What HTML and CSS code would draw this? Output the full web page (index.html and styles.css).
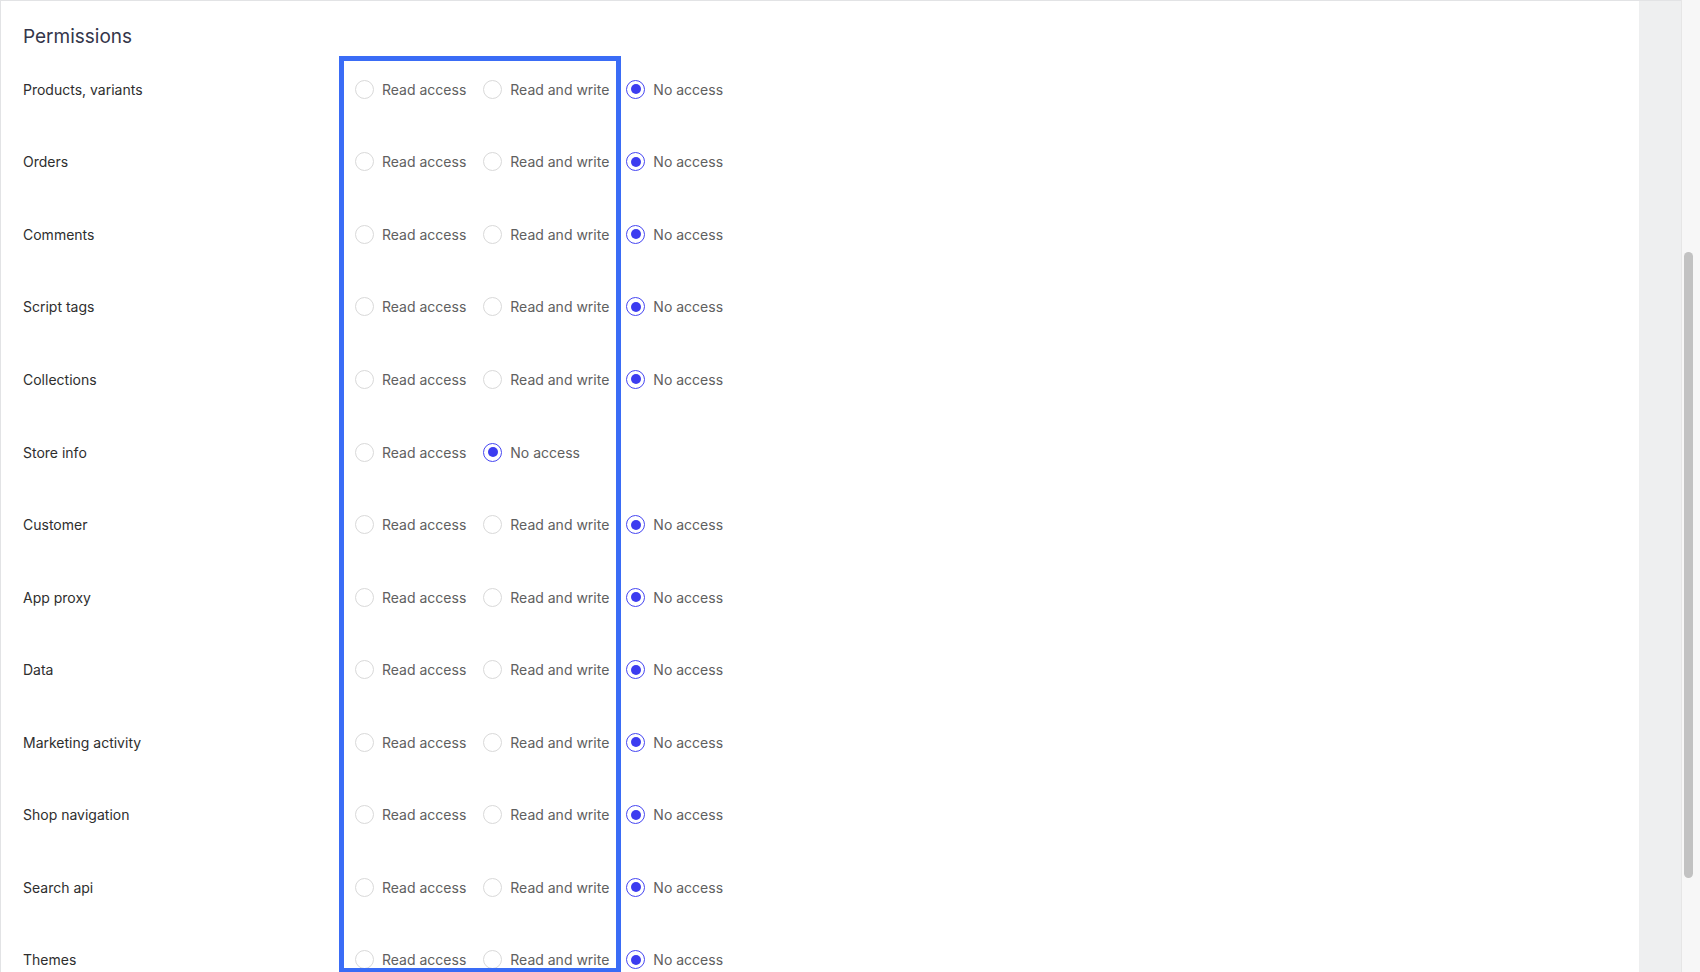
FILE: index.html
```html
<!DOCTYPE html>
<html lang="en">
<head>
<meta charset="utf-8">
<title>Permissions</title>
<link rel="stylesheet" href="styles.css">
</head>
<body>
<div class="page">
  <main class="panel">
    <h2 class="title">Permissions</h2>
    <div class="perm-list">
      <div class="perm-row"><span class="perm-label">Products, variants</span><div class="opts"><label class="opt"><span class="radio"></span>Read access</label><label class="opt"><span class="radio"></span>Read and write</label><label class="opt"><span class="radio checked"></span>No access</label></div></div>
      <div class="perm-row"><span class="perm-label">Orders</span><div class="opts"><label class="opt"><span class="radio"></span>Read access</label><label class="opt"><span class="radio"></span>Read and write</label><label class="opt"><span class="radio checked"></span>No access</label></div></div>
      <div class="perm-row"><span class="perm-label">Comments</span><div class="opts"><label class="opt"><span class="radio"></span>Read access</label><label class="opt"><span class="radio"></span>Read and write</label><label class="opt"><span class="radio checked"></span>No access</label></div></div>
      <div class="perm-row"><span class="perm-label">Script tags</span><div class="opts"><label class="opt"><span class="radio"></span>Read access</label><label class="opt"><span class="radio"></span>Read and write</label><label class="opt"><span class="radio checked"></span>No access</label></div></div>
      <div class="perm-row"><span class="perm-label">Collections</span><div class="opts"><label class="opt"><span class="radio"></span>Read access</label><label class="opt"><span class="radio"></span>Read and write</label><label class="opt"><span class="radio checked"></span>No access</label></div></div>
      <div class="perm-row"><span class="perm-label">Store info</span><div class="opts"><label class="opt"><span class="radio"></span>Read access</label><label class="opt"><span class="radio checked"></span>No access</label></div></div>
      <div class="perm-row"><span class="perm-label">Customer</span><div class="opts"><label class="opt"><span class="radio"></span>Read access</label><label class="opt"><span class="radio"></span>Read and write</label><label class="opt"><span class="radio checked"></span>No access</label></div></div>
      <div class="perm-row"><span class="perm-label">App proxy</span><div class="opts"><label class="opt"><span class="radio"></span>Read access</label><label class="opt"><span class="radio"></span>Read and write</label><label class="opt"><span class="radio checked"></span>No access</label></div></div>
      <div class="perm-row"><span class="perm-label">Data</span><div class="opts"><label class="opt"><span class="radio"></span>Read access</label><label class="opt"><span class="radio"></span>Read and write</label><label class="opt"><span class="radio checked"></span>No access</label></div></div>
      <div class="perm-row"><span class="perm-label">Marketing activity</span><div class="opts"><label class="opt"><span class="radio"></span>Read access</label><label class="opt"><span class="radio"></span>Read and write</label><label class="opt"><span class="radio checked"></span>No access</label></div></div>
      <div class="perm-row"><span class="perm-label">Shop navigation</span><div class="opts"><label class="opt"><span class="radio"></span>Read access</label><label class="opt"><span class="radio"></span>Read and write</label><label class="opt"><span class="radio checked"></span>No access</label></div></div>
      <div class="perm-row"><span class="perm-label">Search api</span><div class="opts"><label class="opt"><span class="radio"></span>Read access</label><label class="opt"><span class="radio"></span>Read and write</label><label class="opt"><span class="radio checked"></span>No access</label></div></div>
      <div class="perm-row"><span class="perm-label">Themes</span><div class="opts"><label class="opt"><span class="radio"></span>Read access</label><label class="opt"><span class="radio"></span>Read and write</label><label class="opt"><span class="radio checked"></span>No access</label></div></div>
    </div>
    <div class="highlight"></div>
  </main>
  <aside class="gutter"></aside>
  <div class="scrollbar"><div class="thumb"></div></div>
</div>
</body>
</html>
```

FILE: styles.css
```css
html, body {
  margin: 0;
  padding: 0;
  height: 100%;
  overflow: hidden;
}
body {
  font-family: Inter, "Noto Sans", "Liberation Sans", sans-serif;
  background: #eff0f1;
}
.page {
  display: flex;
  height: 972px;
  width: 1700px;
}
.panel {
  position: relative;
  width: 1639px;
  flex: none;
  background: #ffffff;
  border-top: 1px solid #e2e3e5;
  border-left: 1px solid #e2e3e5;
  box-sizing: border-box;
  padding: 22px 0 0 22px;
  overflow: hidden;
}
.title {
  margin: 0;
  font-size: 19px;
  line-height: 28px;
  font-weight: 400;
  color: #34364a;
}
.perm-list {
  margin-top: 2px;
}
.perm-row {
  display: grid;
  grid-template-columns: 332px auto;
  align-items: center;
  height: 72.55px;
}
.perm-label {
  font-size: 14px;
  color: #2e2e2e;
}
.opts {
  display: flex;
  align-items: center;
  gap: 17px;
}
.opt {
  display: flex;
  align-items: center;
  gap: 8px;
  font-size: 14px;
  color: #606060;
  white-space: nowrap;
}
.radio {
  width: 19px;
  height: 19px;
  box-sizing: border-box;
  border: 1px solid #d9d9d9;
  border-radius: 50%;
  background: #fff;
  display: flex;
  align-items: center;
  justify-content: center;
}
.radio.checked {
  border: 1.5px solid #4646f2;
}
.radio.checked::after {
  content: "";
  width: 10px;
  height: 10px;
  border-radius: 50%;
  background: #3c3cf0;
}
.highlight {
  position: absolute;
  left: 338px;
  top: 55px;
  width: 282px;
  height: 917px;
  box-sizing: border-box;
  border: 5px solid #3a6cf6;
  pointer-events: none;
}
.gutter {
  width: 42px;
  flex: none;
  background: #eeeff0;
  border-top: 1px solid #e2e3e5;
  box-sizing: border-box;
}
.scrollbar {
  position: relative;
  width: 19px;
  flex: none;
  background: #f7f7f7;
  border-left: 1px solid #e6e6e6;
  box-sizing: border-box;
}
.thumb {
  position: absolute;
  left: 2px;
  top: 252px;
  width: 9px;
  height: 626px;
  border-radius: 5px;
  background: #c2c2c2;
}
```
